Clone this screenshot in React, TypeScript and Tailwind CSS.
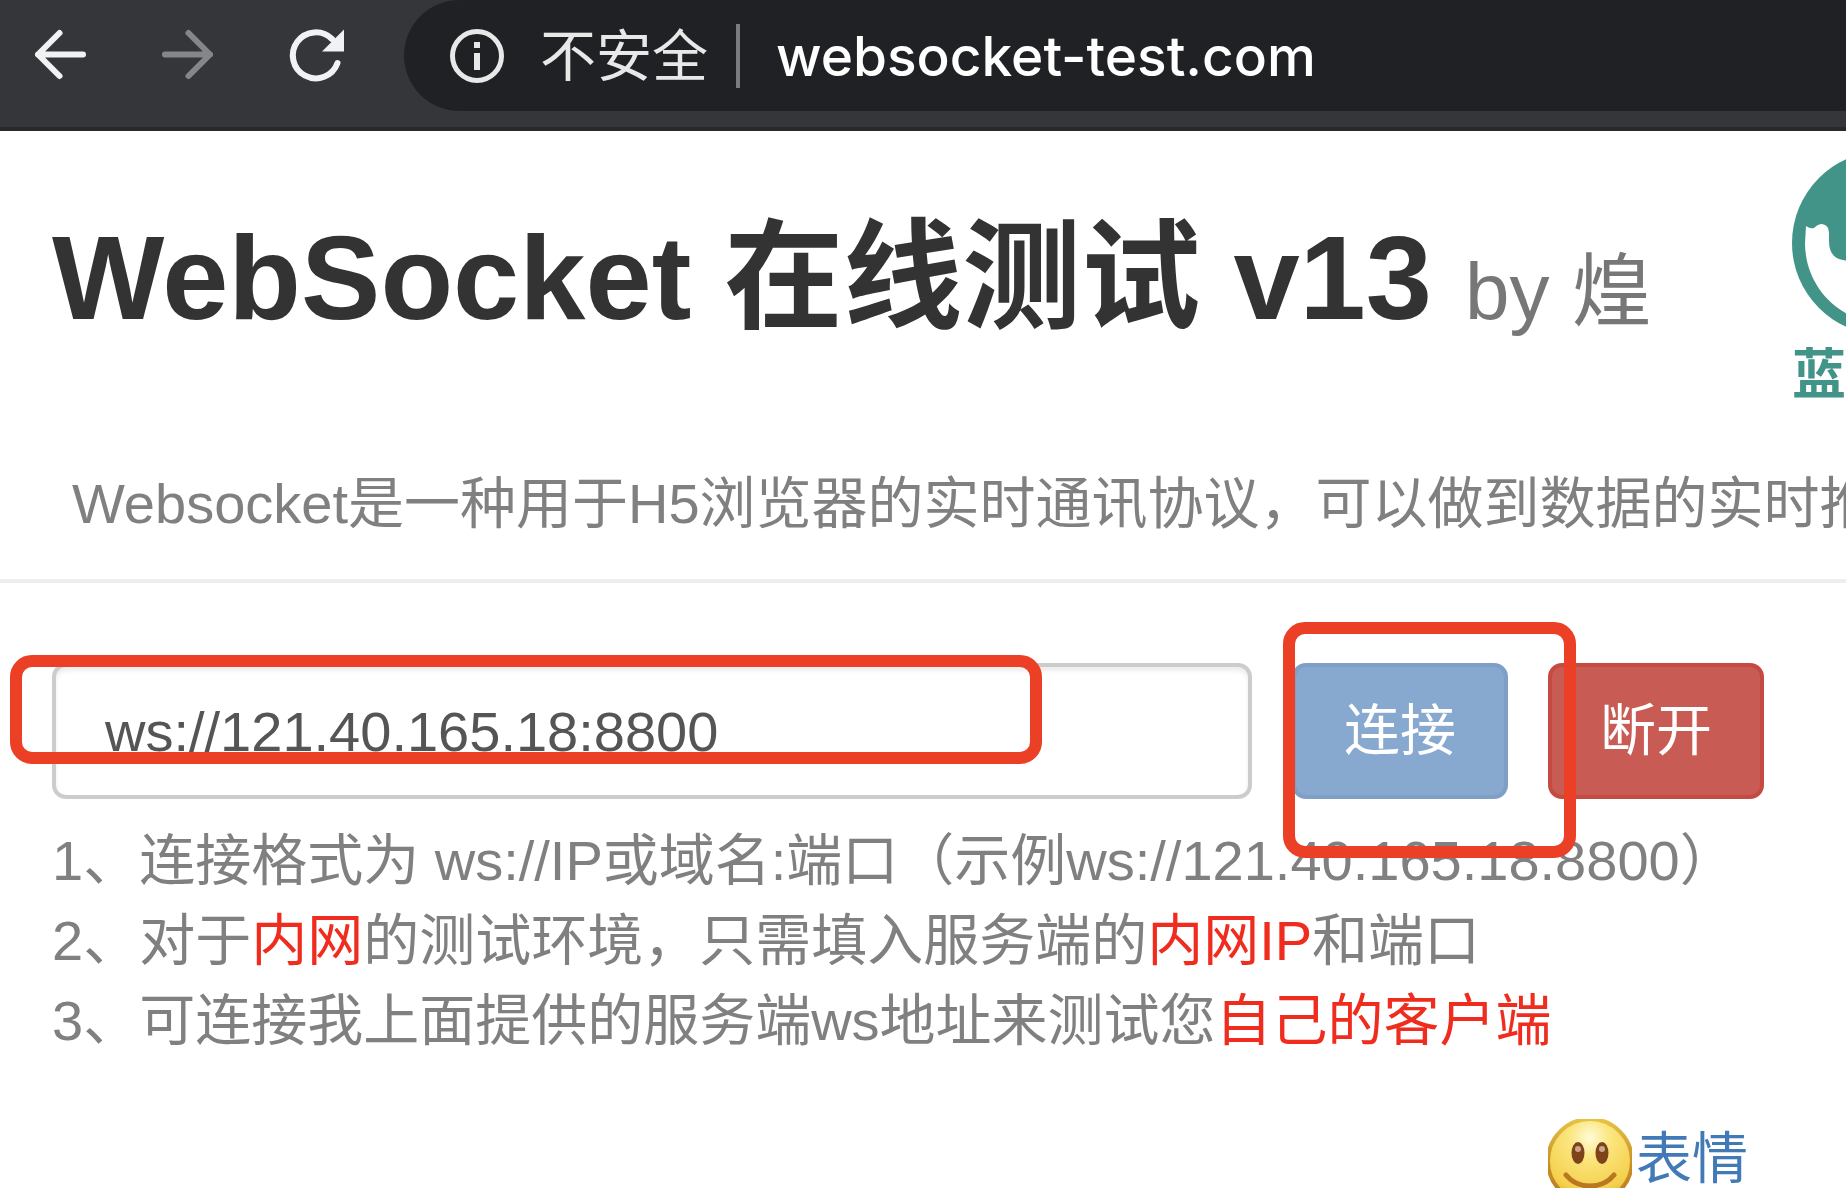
const latin = "font-['Liberation_Sans','Noto_Sans_CJK_SC',sans-serif]";
const ui = "font-['Inter','Noto_Sans_CJK_SC',sans-serif]";

function Toolbar() {
  return (
    <header className="flex h-[131px] shrink-0 items-start border-b-4 border-[#28292b] bg-[#35363a]">
      <nav className="flex h-[111px] w-[404px] shrink-0 items-center gap-[68px] pl-[30px]">
        <button type="button" aria-label="Back" className="text-[#f1f2f4]">
          <svg width="60" height="60" viewBox="0 0 60 60" fill="none" stroke="currentColor" strokeWidth="6" strokeLinecap="round" strokeLinejoin="round">
            <path d="M53 28.500H8M29.500 7L8 28.500L29.500 50" />
          </svg>
        </button>
        <button type="button" aria-label="Forward" className="text-[#85868a]">
          <svg width="60" height="60" viewBox="0 0 60 60" fill="none" stroke="currentColor" strokeWidth="6" strokeLinecap="round" strokeLinejoin="round">
            <path d="M7 28.500H52M30.500 7L52 28.500L30.500 50" />
          </svg>
        </button>
        <button type="button" aria-label="Reload" className="text-[#f1f2f4]">
          <svg width="60" height="60" viewBox="0 0 60 60" fill="none">
            <path d="M51.500 37A23 23 0 1 1 46 13" stroke="currentColor" strokeWidth="6" strokeLinecap="round" />
            <path d="M58 3.500v22H36z" fill="currentColor" />
          </svg>
        </button>
      </nav>
      <div className={`${ui} flex h-[111px] min-w-0 flex-1 items-center rounded-l-[56px] bg-[#202124] pl-[46px] text-[56px] leading-[80px]`}>
        <svg width="54" height="54" viewBox="0 0 54 54" fill="none" className="shrink-0 text-[#e8e8e8]" aria-hidden="true">
          <circle cx="27" cy="27" r="24.500" stroke="currentColor" strokeWidth="5" />
          <path d="M24 24h6v17h-6zM24 13h6v6h-6z" fill="currentColor" />
        </svg>
        <span className="ml-[36px] whitespace-nowrap text-[#e8e8e8]">不安全</span>
        <span className="ml-[28px] h-[64px] w-[4px] shrink-0 bg-[#7b7c7e]" />
        <input
          aria-label="Address"
          defaultValue="websocket-test.com"
          className="ml-[36px] h-[80px] min-w-0 flex-1 bg-transparent text-[55px] font-medium text-white outline-none"
        />
      </div>
    </header>
  );
}

function Logo() {
  return (
    <a href="#logo" className="-mr-[130px] block w-[184px] shrink-0 text-[#429488]">
      <svg width="184" height="184" viewBox="0 0 184 184" aria-hidden="true">
        <circle cx="92" cy="92" r="92" fill="currentColor" />
        <path
          d="M14 75q4 3 8 2q4-4 8-4q7 1 7 9v8q0 17 14 19q20 5 41-2v65C48 172 13 136 13 92z"
          fill="white"
        />
      </svg>
      <span className="mt-[8px] block text-[54px] leading-[64px] font-bold">蓝</span>
    </a>
  );
}

function Smiley() {
  return (
    <svg width="84" height="84" viewBox="0 0 84 84" aria-hidden="true" className="shrink-0">
      <defs>
        <radialGradient id="face" cx="0.5" cy="0.22" r="0.8">
          <stop offset="0" stopColor="#fffbd8" />
          <stop offset="0.3" stopColor="#fbe680" />
          <stop offset="0.8" stopColor="#f4cf4b" />
          <stop offset="1" stopColor="#e0a82e" />
        </radialGradient>
        <linearGradient id="rim" x1="0" y1="0" x2="0" y2="1">
          <stop offset="0" stopColor="#e6c444" />
          <stop offset="0.5" stopColor="#c9922a" />
          <stop offset="1" stopColor="#b97a1c" />
        </linearGradient>
      </defs>
      <circle cx="42" cy="42" r="42" fill="url(#face)" stroke="url(#rim)" strokeWidth="4" />
      <ellipse cx="30" cy="34" rx="6.500" ry="11" fill="#7d431a" />
      <ellipse cx="54" cy="34" rx="6.500" ry="11" fill="#7d431a" />
      <circle cx="30" cy="30" r="3" fill="#c9a58a" />
      <circle cx="54" cy="30" r="3" fill="#c9a58a" />
      <path d="M18 56q9 11 24 11t24-11" fill="none" stroke="#b9781f" strokeWidth="5" strokeLinecap="round" />
    </svg>
  );
}

export default function App() {
  return (
    <div className={`${latin} flex h-screen flex-col overflow-hidden bg-white text-[56px] leading-[80px] text-[#808080]`}>
      <Toolbar />
      <main lang="zh-CN">
        <div className="flex items-start justify-between pt-[20px] pl-[52px]">
          <h1 className="mt-[61px] text-[119px] leading-[132px] font-bold whitespace-nowrap text-[#333]">
            WebSocket 在线测试 v13 <small className="text-[80px] font-normal text-[#777]">by 煌</small>
          </h1>
          <Logo />
        </div>
        <p className="mt-[57px] pl-[72px] whitespace-nowrap">
          Websocket是一种用于H5浏览器的实时通讯协议，可以做到数据的实时推送
        </p>
        <hr className="mt-[35px] border-t-4 border-[#eee]" />
        <form className="mt-[80px] flex gap-[40px] pr-[82px] pl-[52px]" onSubmit={(e) => e.preventDefault()}>
          <div className="relative min-w-0 flex-1">
            <input
              aria-label="服务地址"
              defaultValue="ws://121.40.165.18:8800"
              className="block h-[136px] w-full rounded-[14px] border-4 border-[#ccc] pl-[49px] text-[#555] shadow-[inset_0_4px_4px_rgba(0,0,0,0.075)] outline-none"
            />
            <span className="pointer-events-none absolute -top-[8px] right-[210px] -left-[42px] h-[109px] rounded-[22px] border-12 border-[#eb4025]" />
          </div>
          <div className="relative">
            <button type="button" className="h-[136px] w-[216px] rounded-[14px] border-4 border-[#7f9fc5] bg-[#87a8cf] text-white">
              连接
            </button>
            <span className="pointer-events-none absolute -top-[41px] -right-[68px] -left-[9px] z-10 h-[236px] rounded-[22px] border-12 border-[#eb4025]" />
          </div>
          <button type="button" className="h-[136px] w-[216px] rounded-[14px] border-4 border-[#c54b42] bg-[#c85b54] text-white">
            断开
          </button>
        </form>
        <div className="mt-[22px] pl-[52px] whitespace-nowrap">
          <p>1、连接格式为 ws://IP或域名:端口（示例ws://121.40.165.18:8800）</p>
          <p>
            2、对于<span className="text-[#f02c1f]">内网</span>的测试环境，只需填入服务端的
            <span className="text-[#f02c1f]">内网IP</span>和端口
          </p>
          <p>
            3、可连接我上面提供的服务端ws地址来测试您<span className="text-[#f02c1f]">自己的客户端</span>
          </p>
        </div>
        <div className="mt-[58px] flex justify-end pr-[98px]">
          <a href="#emoji" className="flex items-start gap-[4px] text-[#427ab7]">
            <Smiley />
            表情
          </a>
        </div>
      </main>
    </div>
  );
}
